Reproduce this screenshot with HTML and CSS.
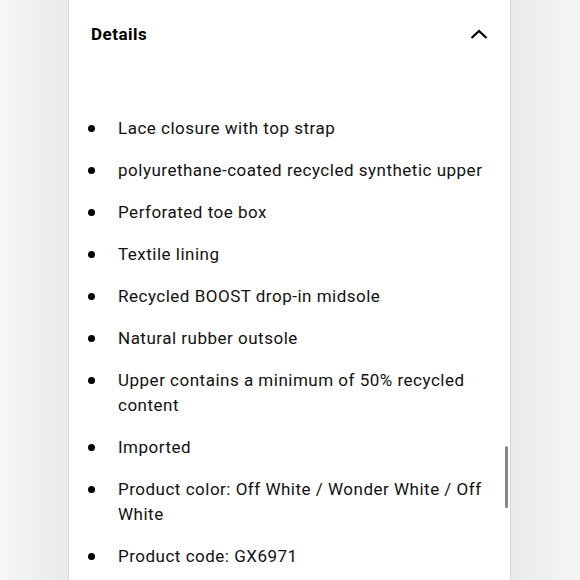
FILE: index.html
```html
<!DOCTYPE html>
<html>
<head>
<meta charset="utf-8">
<link rel="stylesheet" href="styles.css">
</head>
<body>
<div class="page">
  <div class="side side-left"></div>
  <main class="panel">
    <div class="header">
      <h2 class="title">Details</h2>
      <svg class="chevron" width="18" height="10" viewBox="0 0 18 10"><path d="M1.5 9 L9 2 L16.5 9" fill="none" stroke="#000" stroke-width="2.2"/></svg>
    </div>
    <ul class="list">
      <li>Lace closure with top strap</li>
      <li>polyurethane-coated recycled synthetic upper</li>
      <li>Perforated toe box</li>
      <li>Textile lining</li>
      <li>Recycled BOOST drop-in midsole</li>
      <li>Natural rubber outsole</li>
      <li>Upper contains a minimum of 50% recycled content</li>
      <li>Imported</li>
      <li>Product color: Off White / Wonder White / Off White</li>
      <li>Product code: GX6971</li>
    </ul>
    <div class="scrollbar"></div>
  </main>
  <div class="side side-right"></div>
</div>
</body>
</html>
```

FILE: styles.css
```css
html, body {
  margin: 0;
  padding: 0;
  height: 100%;
  overflow: hidden;
}
body {
  font-family: Roboto, "Noto Sans", sans-serif;
  color: #111;
  background: #fff;
}
.page {
  display: flex;
  height: 580px;
}
.side-left {
  flex: 0 0 68px;
  background: linear-gradient(to right, #f6f6f7, #e9eaeb);
}
.side-right {
  flex: 0 0 69px;
  background: linear-gradient(to left, #f6f6f7, #e9eaeb);
}
.panel {
  position: relative;
  flex: 0 0 443px;
  background: #fff;
  border-left: 1px solid #d6d6d6;
  border-right: 1px solid #d6d6d6;
  padding: 0 22px;
  box-sizing: border-box;
}
.header {
  display: flex;
  align-items: center;
  justify-content: space-between;
  height: 68px;
}
.title {
  margin: 0;
  font-size: 17px;
  font-weight: 700;
  letter-spacing: 0.5px;
  color: #000;
}
.chevron {
  display: block;
}
.list {
  list-style: none;
  margin: 48px 0 0;
  padding: 0 0 0 27px;
  font-size: 17px;
  line-height: 25px;
  letter-spacing: 0.5px;
}
.list li {
  position: relative;
  margin-bottom: 17px;
}
.list li::before {
  content: "";
  position: absolute;
  left: -30px;
  top: 9px;
  width: 7px;
  height: 7px;
  border-radius: 50%;
  background: #000;
}
.scrollbar {
  position: absolute;
  right: 2px;
  top: 446px;
  width: 3px;
  height: 62px;
  border-radius: 2px;
  background: #888;
}
```
